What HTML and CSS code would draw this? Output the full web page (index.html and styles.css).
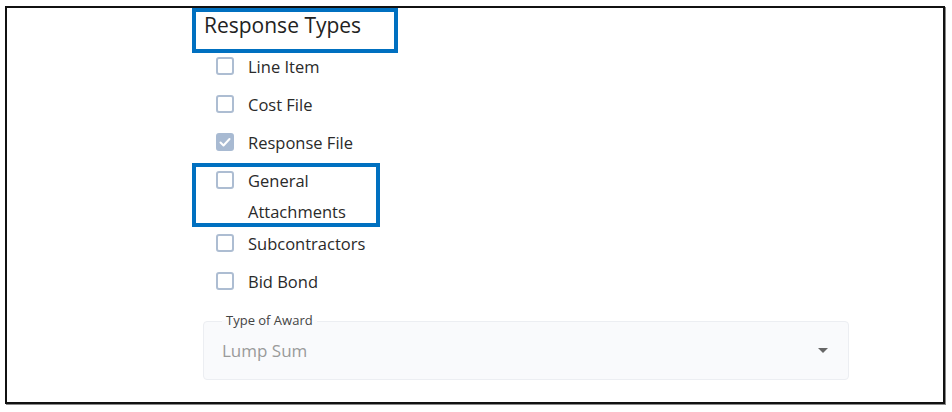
FILE: index.html
```html
<!DOCTYPE html>
<html lang="en">
<head>
    <meta charset="UTF-8">
    <meta name="viewport" content="width=device-width, initial-scale=1.0">
    <title>Response Types</title>
    <link rel="stylesheet" href="styles.css">
</head>
<body>
    <div class="frame">
        <div class="panel">
            <h2 class="title">Response Types</h2>
            <ul class="types">
                <li class="type"><span class="box"></span><span class="label">Line Item</span></li>
                <li class="type"><span class="box"></span><span class="label">Cost File</span></li>
                <li class="type">
                    <span class="box checked">
                        <svg viewBox="0 0 18 18" width="18" height="18"><path d="M4.5 9.5l3 3 6-6.5" fill="none" stroke="#fff" stroke-width="2" stroke-linecap="round" stroke-linejoin="round"/></svg>
                    </span>
                    <span class="label">Response File</span>
                </li>
                <li class="type wrap"><span class="box"></span><span class="label">General Attachments</span></li>
                <li class="type"><span class="box"></span><span class="label">Subcontractors</span></li>
                <li class="type"><span class="box"></span><span class="label">Bid Bond</span></li>
            </ul>
            <div class="select">
                <span class="select-label">Type of Award</span>
                <span class="select-value">Lump Sum</span>
                <span class="caret"></span>
            </div>
        </div>
        <!-- annotation boxes -->
        <div class="mark mark-title"></div>
        <div class="mark mark-general"></div>
    </div>
</body>
</html>
```

FILE: styles.css
```css
body {
    margin: 0;
    background: #fff;
    font-family: "Open Sans", "Noto Sans", sans-serif;
    width: 952px;
    height: 412px;
    overflow: hidden;
}
.frame {
    position: relative;
    margin: 6px 0 0 5px;
    width: 936px;
    height: 394px;
    border: 2px solid #111;
    box-shadow: 1px 1px 0 #888;
}
.panel {
    padding-left: 196px;
}
.title {
    margin: 0;
    padding: 2px 0 0 1px;
    height: 38px;
    font-size: 21px;
    font-weight: 400;
    line-height: 30px;
    color: #222;
}
.types {
    list-style: none;
    margin: 0;
    padding: 0 0 0 13px;
}
.type {
    display: flex;
    align-items: flex-start;
    padding: 3px 0 4px;
}
.type.wrap {
    margin-bottom: -6px;
}
.box {
    flex: none;
    width: 14px;
    height: 14px;
    margin: 6px 14px 0 0;
    border: 2px solid #adbdd2;
    border-radius: 3px;
    background: #fff;
    position: relative;
}
.box.checked {
    background: #a8bad2;
    border-color: #a8bad2;
}
.box svg {
    position: absolute;
    left: -2px;
    top: -2px;
}
.label {
    width: 130px;
    font-size: 16.5px;
    line-height: 31px;
    color: #2a2a2a;
}
.select {
    position: relative;
    margin-top: 20px;
    width: 646px;
    height: 59px;
    background: #f9fafc;
    border: 1px solid #eceef2;
    border-radius: 4px;
    display: flex;
    align-items: center;
    justify-content: space-between;
    padding: 0 20px 0 18px;
    box-sizing: border-box;
}
.select-label {
    position: absolute;
    left: 18px;
    top: -11px;
    padding: 0 4px;
    font-size: 13px;
    line-height: 18px;
    color: #444;
    background: linear-gradient(#fff 50%, #f9fafc 50%);
}
.select-value {
    font-size: 17px;
    color: #9a9a9a;
}
.caret {
    width: 0;
    height: 0;
    border-left: 5px solid transparent;
    border-right: 5px solid transparent;
    border-top: 5px solid #666;
}
.mark {
    position: absolute;
    border: 4px solid #0070c0;
}
.mark-title {
    left: 185px;
    top: 0;
    width: 198px;
    height: 37px;
}
.mark-general {
    left: 185px;
    top: 155px;
    width: 180px;
    height: 56px;
}
```
